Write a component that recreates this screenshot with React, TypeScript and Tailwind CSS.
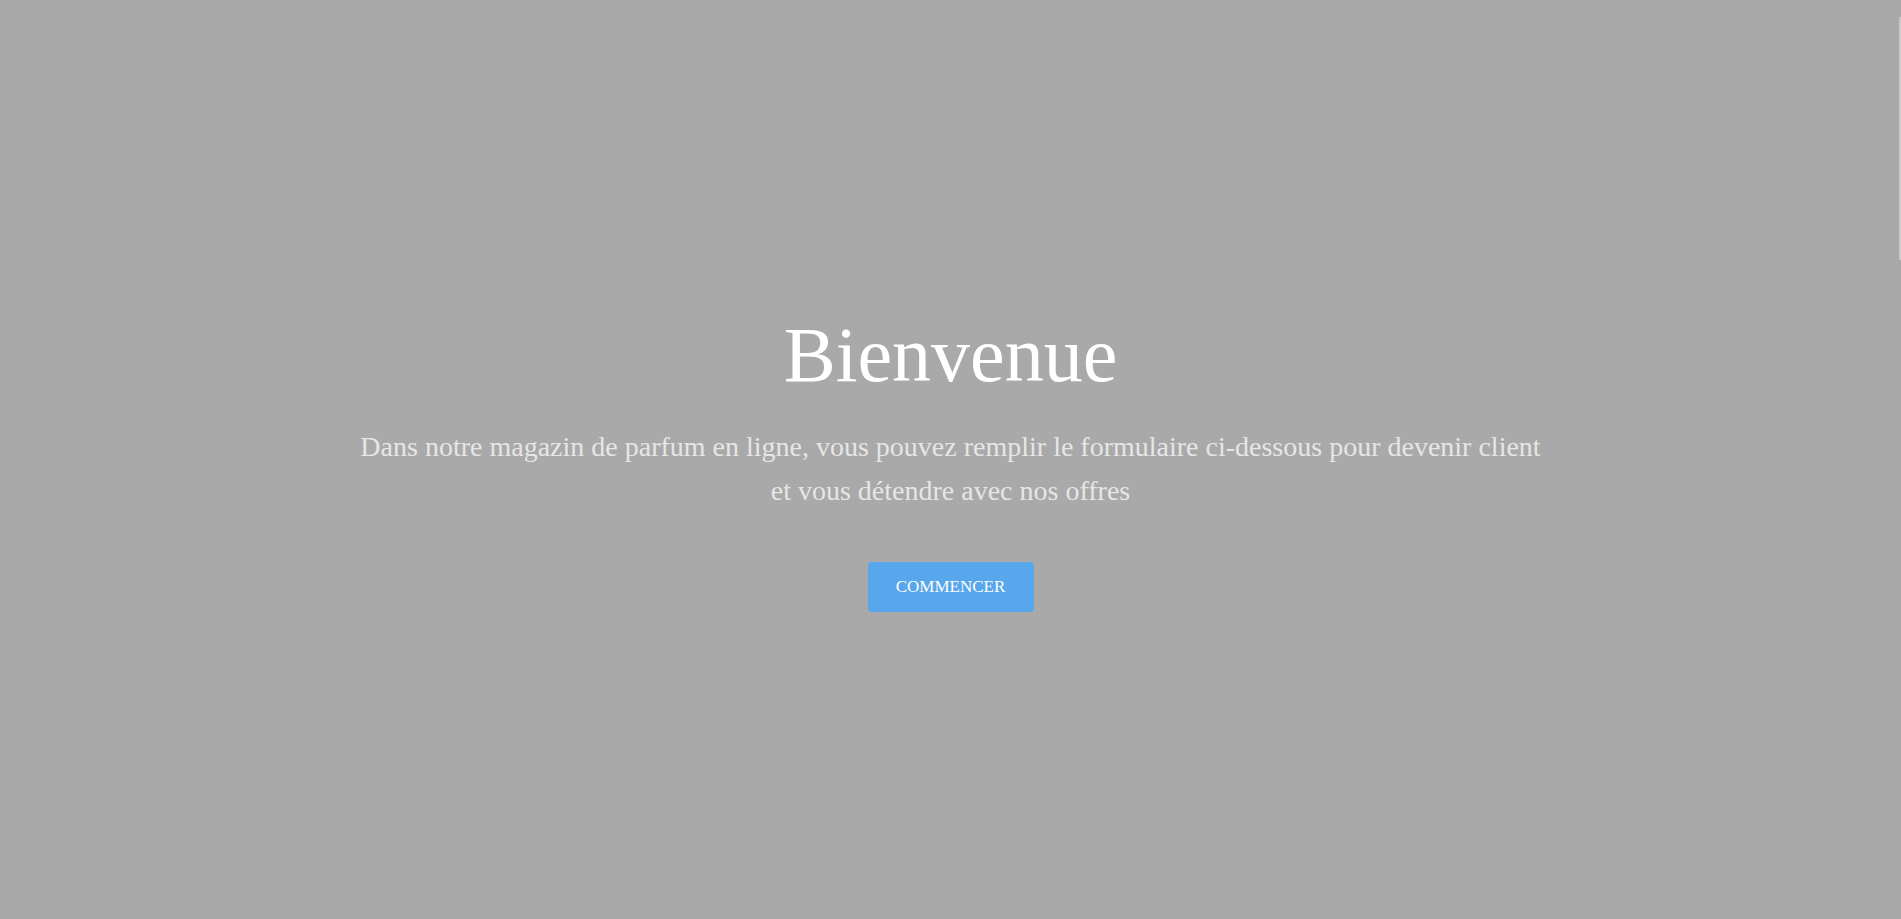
export default function App() {
  return (
    <main
      className="relative w-full h-[919px] bg-[#a9a9a9] flex flex-col items-center justify-center text-center"
      style={{ fontFamily: '"Liberation Serif", "DejaVu Serif", serif' }}
    >
      <h1 className="text-[78px] leading-[80px] text-white mt-[8px]">Bienvenue</h1>
      <p className="mt-[30px] max-w-[1300px] text-[28px] leading-[44px] text-[#e6e6e6]">
        Dans notre magazin de parfum en ligne, vous pouvez remplir le formulaire ci-dessous pour devenir client
        <br />
        et vous détendre avec nos offres
      </p>
      <button className="mt-[49px] w-[166px] h-[50px] rounded-[4px] bg-[#58a6ec] text-white text-[17px]">
        COMMENCER
      </button>
      <div className="absolute right-0 top-[17px] w-[2px] h-[243px] bg-[#c9c9c9]" />
    </main>
  );
}
